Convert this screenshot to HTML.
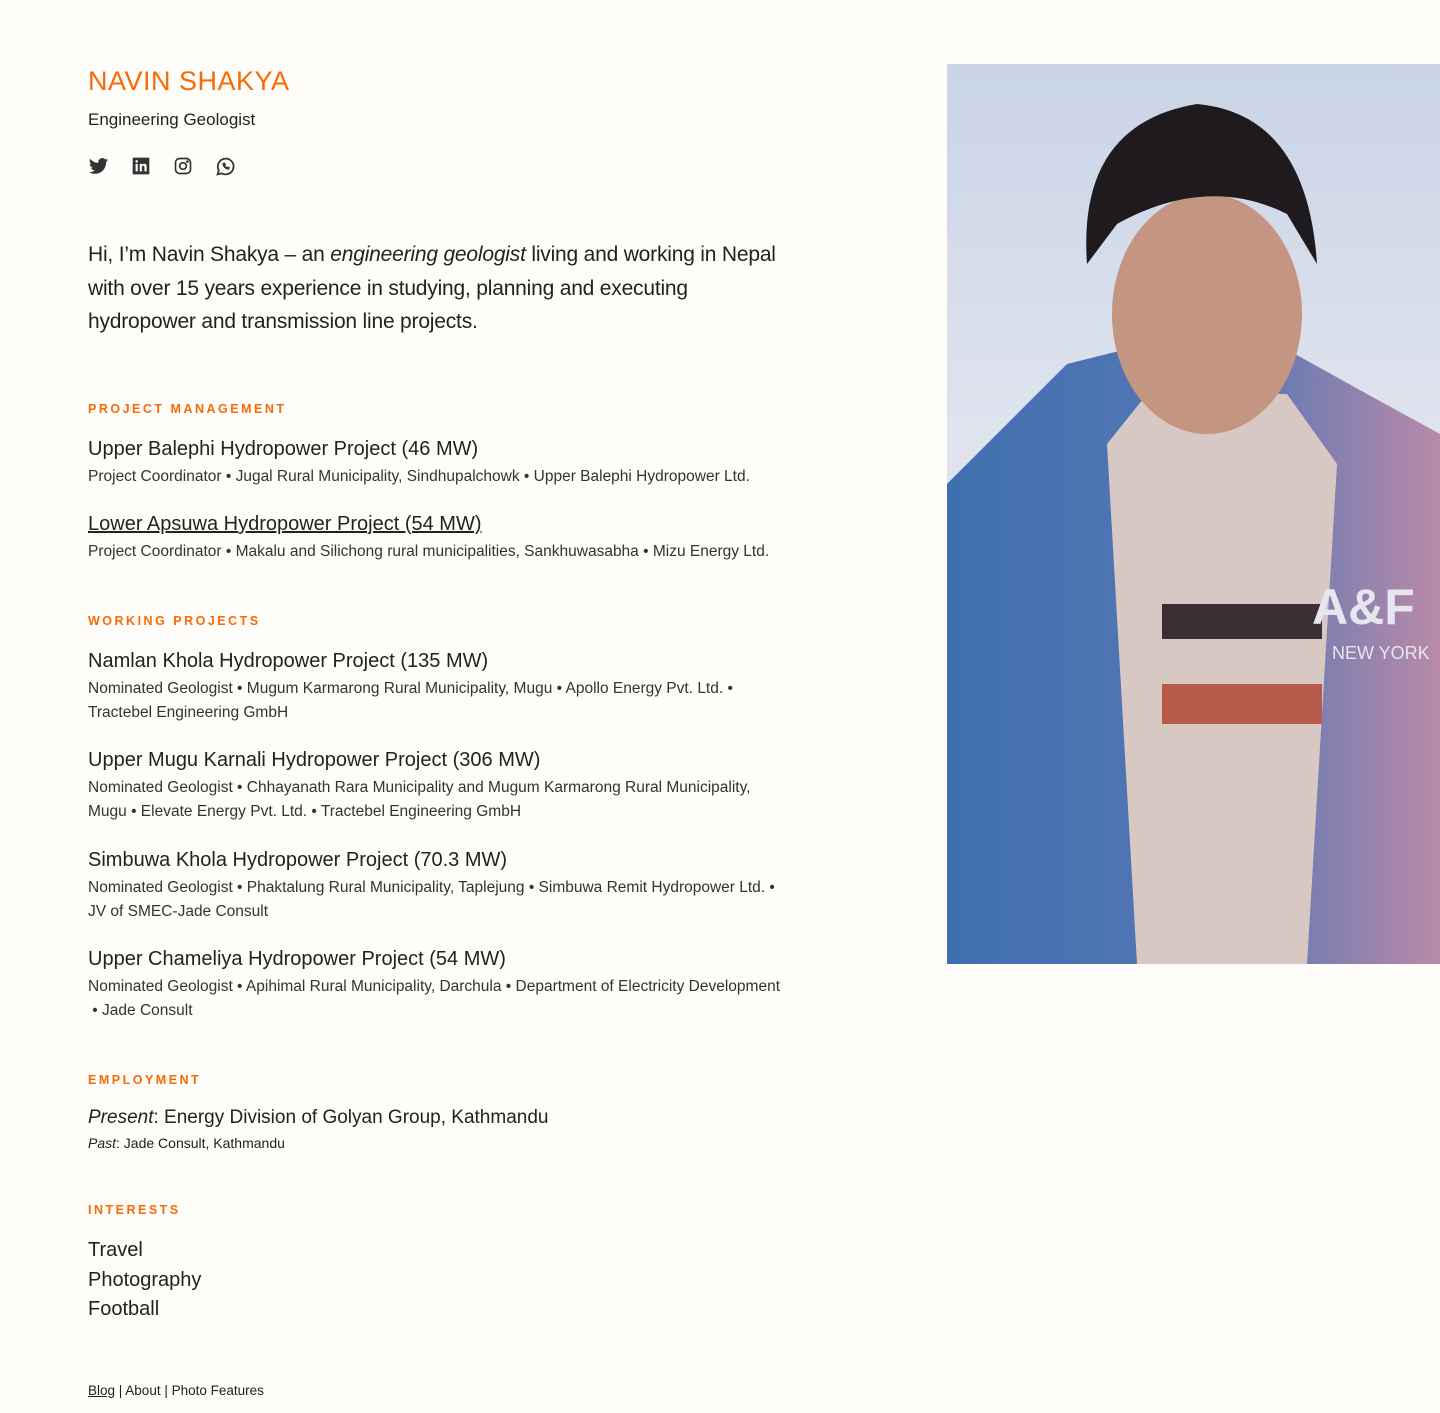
<!DOCTYPE html>
<html><head><meta charset="utf-8"><style>
body{margin:0;background:#fefdf9;font-family:"Liberation Sans",sans-serif;color:#222;}
.wrap{position:relative;width:1440px;height:1413px;overflow:hidden}
.l{position:absolute;left:88px;width:750px}
h1{position:absolute;left:88px;top:66px;margin:0;font-size:27px;font-weight:normal;color:#f86a06;letter-spacing:0.5px}
.sub{top:110px;font-size:17px}
.icons{position:absolute;left:88px;top:156px;display:flex;gap:22px}
.intro{top:238px;font-size:21px;line-height:33.5px;letter-spacing:-0.2px;width:800px}
.h{font-size:12.5px;font-weight:bold;letter-spacing:2.5px;color:#f86a06}
.t{font-size:20px}
.d{font-size:15.5px;line-height:24px;color:#333}
.photo{position:absolute;left:947px;top:64px;width:493px;height:900px;overflow:hidden;
background:linear-gradient(180deg,#c9d4e6 0%,#dfe3ee 40%,#e8e0e6 100%)}
a{color:#222}
</style></head><body><div class="wrap">
<h1>NAVIN SHAKYA</h1>
<div class="l sub">Engineering Geologist</div>
<div class="icons">
<svg width="21" height="21" viewBox="0 0 24 24" fill="#333"><path d="M23 4.6a9 9 0 0 1-2.6.7 4.5 4.5 0 0 0 2-2.5 9 9 0 0 1-2.9 1.1A4.5 4.5 0 0 0 11.8 8 12.8 12.8 0 0 1 2.5 3.3a4.5 4.5 0 0 0 1.4 6 4.5 4.5 0 0 1-2-.6 4.5 4.5 0 0 0 3.6 4.5 4.5 4.5 0 0 1-2 .1 4.5 4.5 0 0 0 4.2 3.1A9 9 0 0 1 1 18.3 12.8 12.8 0 0 0 7.9 20.3c8.3 0 12.8-6.9 12.8-12.8v-.6A9 9 0 0 0 23 4.6z"/></svg>
<svg width="20" height="20" viewBox="0 0 24 24"><rect x="2" y="2" width="20" height="20" rx="1" fill="#333"/><rect x="5.5" y="9.5" width="2.6" height="9" fill="#fff"/><circle cx="6.8" cy="6.5" r="1.5" fill="#fff"/><path d="M10.5 9.5h2.5v1.3c.6-1 1.6-1.5 2.8-1.5 2 0 3 1.3 3 3.6v5.6h-2.6v-5c0-1.2-.4-1.9-1.4-1.9s-1.7.7-1.7 1.9v5h-2.6z" fill="#fff"/></svg>
<svg width="20" height="20" viewBox="0 0 24 24" fill="none" stroke="#333" stroke-width="2"><rect x="3" y="3" width="18" height="18" rx="5"/><circle cx="12" cy="12" r="4"/><circle cx="17.3" cy="6.7" r=".6" fill="#333"/></svg>
<svg width="21" height="21" viewBox="0 0 24 24" fill="none" stroke="#333" stroke-width="2"><path d="M3 21l1.4-4.6A9 9 0 1 1 7.8 19.8z"/><path d="M9 8.5c0 3.5 3 6.5 6.5 6.5l1-1.5-2-1-1 .8a5 5 0 0 1-2.3-2.3l.8-1-1-2z" fill="#333" stroke-width="1"/></svg>
</div>
<div class="l intro">Hi, I’m Navin Shakya – an <i>engineering geologist</i> living and working in Nepal<br>with over 15 years experience in studying, planning and executing<br>hydropower and transmission line projects.</div>

<div class="l h" style="top:402px">PROJECT MANAGEMENT</div>
<div class="l t" style="top:438px">Upper Balephi Hydropower Project (46 MW)</div>
<div class="l d" style="top:465px">Project Coordinator • Jugal Rural Municipality, Sindhupalchowk • Upper Balephi Hydropower Ltd.</div>
<div class="l t" style="top:513px"><a href="#">Lower Apsuwa Hydropower Project (54 MW)</a></div>
<div class="l d" style="top:540px">Project Coordinator • Makalu and Silichong rural municipalities, Sankhuwasabha • Mizu Energy Ltd.</div>

<div class="l h" style="top:614px">WORKING PROJECTS</div>
<div class="l t" style="top:650px">Namlan Khola Hydropower Project (135 MW)</div>
<div class="l d" style="top:677px">Nominated Geologist • Mugum Karmarong Rural Municipality, Mugu • Apollo Energy Pvt. Ltd. •<br>Tractebel Engineering GmbH</div>
<div class="l t" style="top:749px">Upper Mugu Karnali Hydropower Project (306 MW)</div>
<div class="l d" style="top:776px">Nominated Geologist • Chhayanath Rara Municipality and Mugum Karmarong Rural Municipality,<br>Mugu • Elevate Energy Pvt. Ltd. • Tractebel Engineering GmbH</div>
<div class="l t" style="top:849px">Simbuwa Khola Hydropower Project (70.3 MW)</div>
<div class="l d" style="top:876px">Nominated Geologist • Phaktalung Rural Municipality, Taplejung • Simbuwa Remit Hydropower Ltd. •<br>JV of SMEC-Jade Consult</div>
<div class="l t" style="top:948px">Upper Chameliya Hydropower Project (54 MW)</div>
<div class="l d" style="top:975px">Nominated Geologist • Apihimal Rural Municipality, Darchula • Department of Electricity Development<br>&nbsp;• Jade Consult</div>

<div class="l h" style="top:1073px">EMPLOYMENT</div>
<div class="l t" style="top:1107px;font-size:19px"><i>Present</i>: Energy Division of Golyan Group, Kathmandu</div>
<div class="l" style="top:1135px;font-size:14px"><i>Past</i>: Jade Consult, Kathmandu</div>

<div class="l h" style="top:1203px">INTERESTS</div>
<div class="l t" style="top:1236px;line-height:29.5px">Travel<br>Photography<br>Football</div>

<div class="l" style="top:1383px;font-size:13.5px"><a href="#">Blog</a> | About | Photo Features</div>

<div class="photo">
<svg width="493" height="900" viewBox="0 0 493 900">
<defs><linearGradient id="g" x1="0" x2="1"><stop offset="0" stop-color="#3f6fb0"/><stop offset=".6" stop-color="#5a78b5"/><stop offset="1" stop-color="#b98aa8"/></linearGradient></defs>
<path d="M0 420 L120 300 L200 280 L330 280 L420 330 L493 370 L493 900 L0 900z" fill="url(#g)"/>
<path d="M160 380 L200 330 L340 330 L390 400 L360 900 L190 900z" fill="#d8c8c4"/>
<rect x="215" y="540" width="160" height="35" fill="#3a2f35"/>
<rect x="215" y="620" width="160" height="40" fill="#b85a4a"/>
<ellipse cx="260" cy="250" rx="95" ry="120" fill="#c49580"/>
<path d="M140 200 Q130 60 250 40 Q360 50 370 200 L340 150 Q260 110 170 160z" fill="#1e1a1e"/>
<text x="365" y="560" font-family="Liberation Sans" font-weight="bold" font-size="50" fill="#e6e6ee">A&amp;F</text>
<text x="385" y="595" font-family="Liberation Sans" font-size="18" fill="#e6e6ee">NEW YORK</text>
</svg>
</div>
</div></body></html>
